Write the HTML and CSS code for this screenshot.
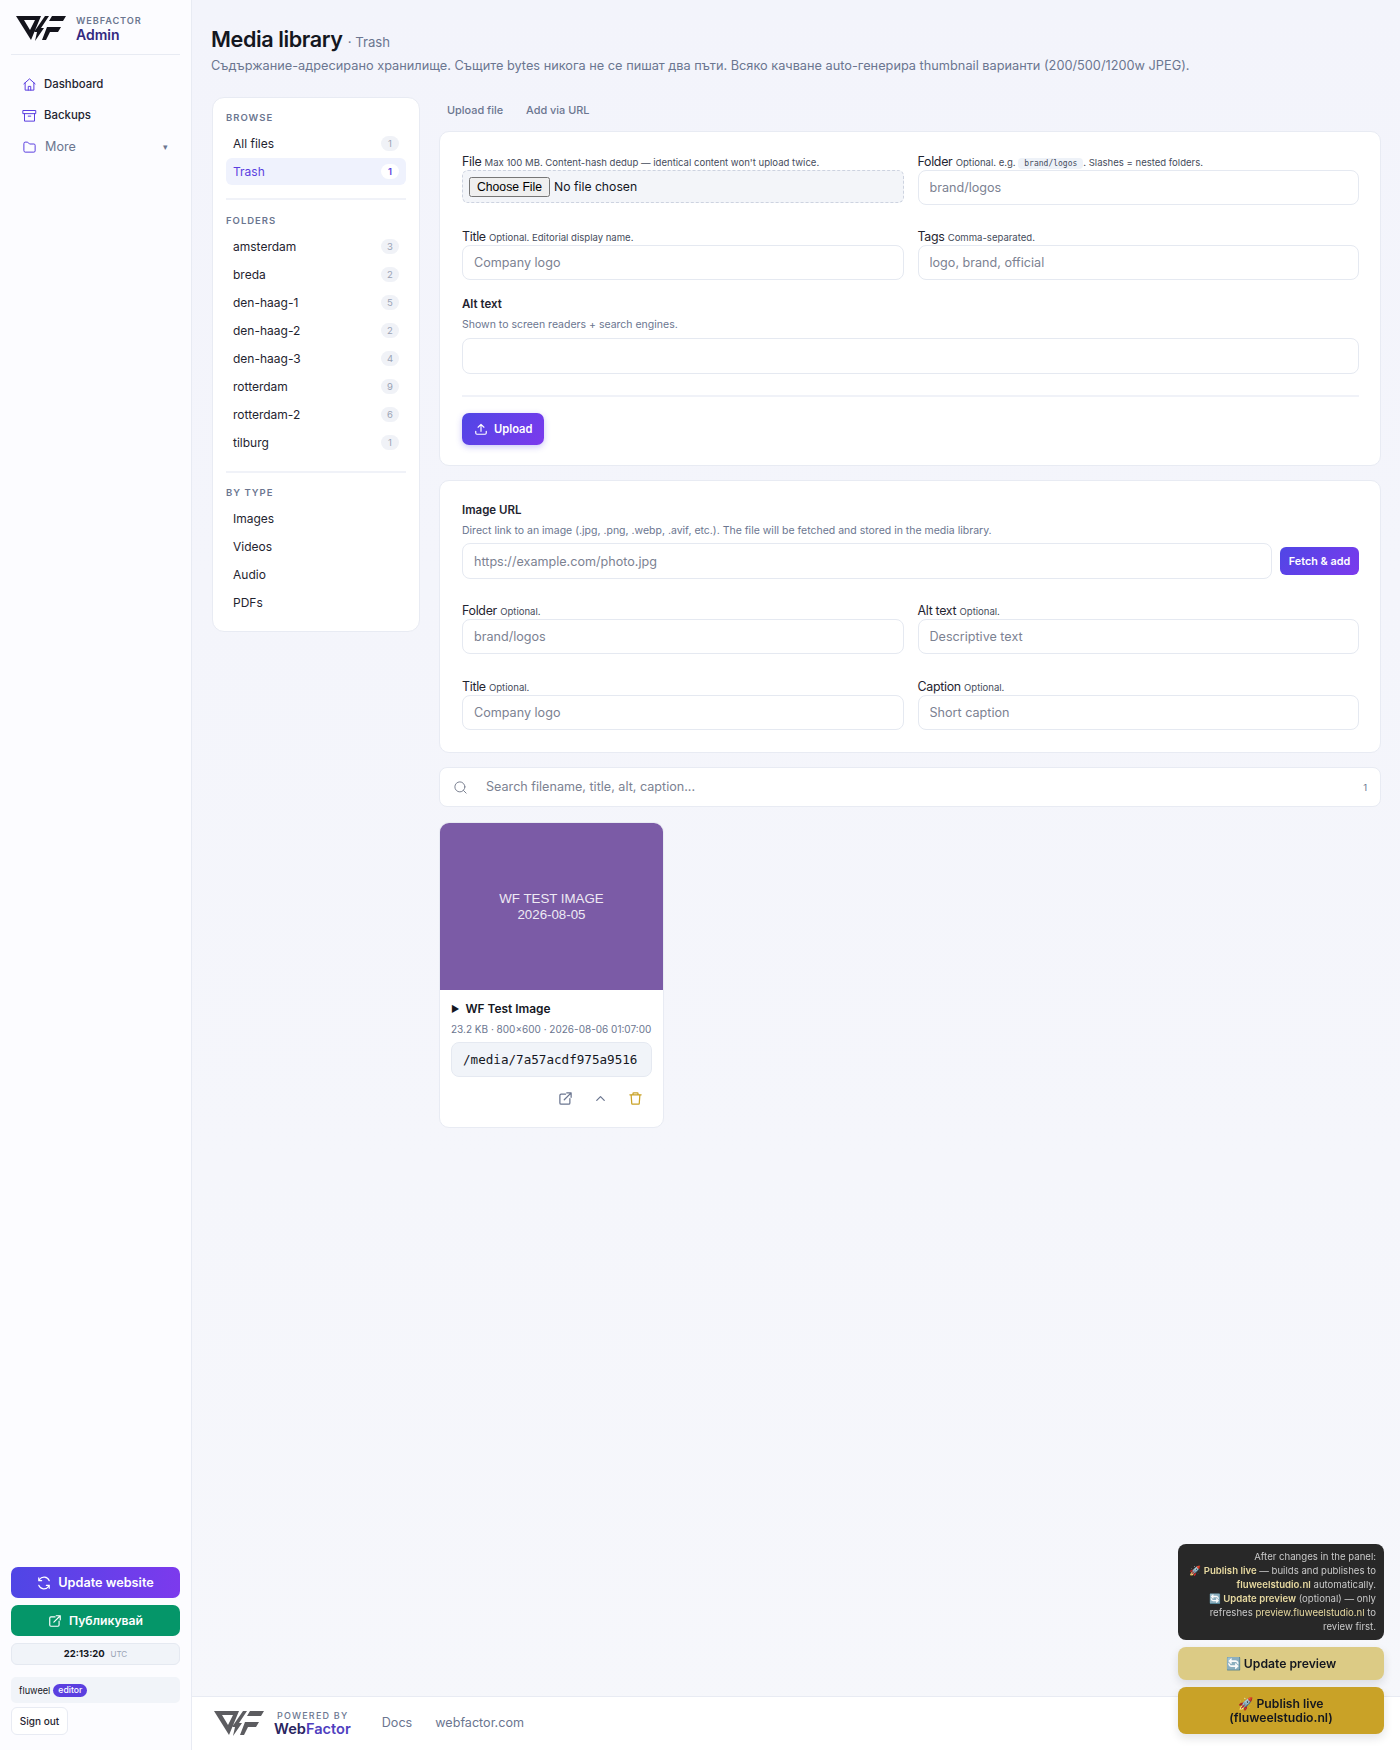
FILE: index.html
```html
<!DOCTYPE html>
<html lang="en">
<head>
  <meta charset="UTF-8">
  <title>Media library</title>
  <link rel="stylesheet" href="styles.css">
</head>
<body>
  <div class="shell">

    <!-- Sidebar -->
    <aside class="sidebar">
      <div class="brand">
        <svg class="wf-logo" viewBox="0 0 50 25" width="50" height="25"><path fill-rule="evenodd" d="M0 0H25L15 24ZM8 4l6 10 5-10ZM29 0h4L25 12h3L19 25l2-9h-3zM36 0h14l-3 5H33zM31 11h14l-3 5H34l-4 8h-4z"/></svg>
        <div>
          <div class="brand-top">WEBFACTOR</div>
          <div class="brand-name">Admin</div>
        </div>
      </div>

      <nav class="side-nav">
        <a class="nav-item">
          <svg class="nav-icon" viewBox="0 0 24 24"><path d="M3 11l9-8 9 8M5 9.500V21h14V9.500M10 21v-6h4v6"/></svg>
          Dashboard
        </a>
        <a class="nav-item">
          <svg class="nav-icon" viewBox="0 0 24 24"><path d="M2 4h20v5H2zM4 9v12h16V9M10 13h4"/></svg>
          Backups
        </a>
        <a class="nav-item nav-more">
          <svg class="nav-icon" viewBox="0 0 24 24"><path d="M3 7a2 2 0 0 1 2-2h4l3 3h7a2 2 0 0 1 2 2v9a2 2 0 0 1-2 2H5a2 2 0 0 1-2-2z"/></svg>
          More
          <span class="caret">▾</span>
        </a>
      </nav>

      <div class="side-bottom">
        <button class="btn-wide btn-purple">
          <svg class="btn-icon" viewBox="0 0 24 24"><path d="M21 8a9.500 9.500 0 0 0-17-1.500L3 8M3 3v5h5M3 16a9.500 9.500 0 0 0 17 1.500l1-1.500M21 21v-5h-5"/></svg>
          Update website
        </button>
        <button class="btn-wide btn-green">
          <svg class="btn-icon" viewBox="0 0 24 24"><path d="M12 5H5a2 2 0 0 0-2 2v12a2 2 0 0 0 2 2h12a2 2 0 0 0 2-2v-7M14 3h7v7M21 3L10 14"/></svg>
          Публикувай
        </button>
        <div class="clock"><b>22:13:20</b> <span>UTC</span></div>
        <div class="user-box">fluweel <span class="role">editor</span></div>
        <button class="sign-out">Sign out</button>
      </div>
    </aside>

    <div class="main">
      <div class="content">
        <h1 class="page-title">Media library <small>· Trash</small></h1>
        <p class="page-sub">Съдържание-адресирано хранилище. Същите bytes никога не се пишат два пъти. Всяко качване auto-генерира thumbnail варианти (200/500/1200w JPEG).</p>

        <div class="columns">
          <!-- Browse panel -->
          <div class="browse">
            <div class="browse-label">BROWSE</div>
            <a class="browse-row">All files <span class="count">1</span></a>
            <a class="browse-row active">Trash <span class="count">1</span></a>
            <hr>
            <div class="browse-label">FOLDERS</div>
            <a class="browse-row">amsterdam <span class="count">3</span></a>
            <a class="browse-row">breda <span class="count">2</span></a>
            <a class="browse-row">den-haag-1 <span class="count">5</span></a>
            <a class="browse-row">den-haag-2 <span class="count">2</span></a>
            <a class="browse-row">den-haag-3 <span class="count">4</span></a>
            <a class="browse-row">rotterdam <span class="count">9</span></a>
            <a class="browse-row">rotterdam-2 <span class="count">6</span></a>
            <a class="browse-row">tilburg <span class="count">1</span></a>
            <hr class="hr-wide">
            <div class="browse-label">BY TYPE</div>
            <a class="browse-row">Images</a>
            <a class="browse-row">Videos</a>
            <a class="browse-row">Audio</a>
            <a class="browse-row">PDFs</a>
          </div>

          <div class="right-col">
            <div class="tabs">
              <a>Upload file</a>
              <a>Add via URL</a>
            </div>

            <!-- Upload form -->
            <section class="card upload-card">
              <div class="field-grid">
                <label class="field">
                  <span class="field-label">File <small>Max 100 MB. Content-hash dedup — identical content won't upload twice.</small></span>
                  <input class="file-input" type="file">
                </label>
                <label class="field">
                  <span class="field-label">Folder <small>Optional. e.g. <code>brand/logos</code>. Slashes = nested folders.</small></span>
                  <input type="text" placeholder="brand/logos">
                </label>
                <label class="field">
                  <span class="field-label">Title <small>Optional. Editorial display name.</small></span>
                  <input type="text" placeholder="Company logo">
                </label>
                <label class="field">
                  <span class="field-label">Tags <small>Comma-separated.</small></span>
                  <input type="text" placeholder="logo, brand, official">
                </label>
              </div>
              <div class="stack-label">Alt text</div>
              <div class="stack-hint">Shown to screen readers + search engines.</div>
              <input class="alt-input" type="text">
              <hr class="form-rule">
              <button class="btn-upload">
                <svg class="btn-icon" viewBox="0 0 24 24"><path d="M3 16v3a2 2 0 0 0 2 2h14a2 2 0 0 0 2-2v-3M12 16V4M7 9l5-5 5 5"/></svg>
                Upload
              </button>
            </section>

            <!-- Add via URL form -->
            <section class="card url-card">
              <div class="stack-label">Image URL</div>
              <div class="stack-hint">Direct link to an image (.jpg, .png, .webp, .avif, etc.). The file will be fetched and stored in the media library.</div>
              <div class="url-row">
                <input type="text" placeholder="https://example.com/photo.jpg">
                <button class="btn-fetch">Fetch &amp; add</button>
              </div>
              <div class="field-grid url-grid">
                <label class="field">
                  <span class="field-label">Folder <small>Optional.</small></span>
                  <input type="text" placeholder="brand/logos">
                </label>
                <label class="field">
                  <span class="field-label">Alt text <small>Optional.</small></span>
                  <input type="text" placeholder="Descriptive text">
                </label>
                <label class="field">
                  <span class="field-label">Title <small>Optional.</small></span>
                  <input type="text" placeholder="Company logo">
                </label>
                <label class="field">
                  <span class="field-label">Caption <small>Optional.</small></span>
                  <input type="text" placeholder="Short caption">
                </label>
              </div>
            </section>

            <div class="search-bar">
              <svg class="search-icon" viewBox="0 0 24 24"><circle cx="11" cy="11" r="8"/><path d="M21 21l-4.300-4.300"/></svg>
              <input type="text" placeholder="Search filename, title, alt, caption...">
              <span class="search-count">1</span>
            </div>

            <!-- Media grid -->
            <div class="media-card">
              <div class="thumb">WF TEST IMAGE<br>2026-08-05</div>
              <div class="media-body">
                <div class="media-title"><span class="tri">▶</span> WF Test Image</div>
                <div class="media-meta">23.2 KB · 800×600 · 2026-08-06 01:07:00</div>
                <div class="media-path">/media/7a57acdf975a9516</div>
                <div class="media-actions">
                  <svg viewBox="0 0 24 24"><path d="M12 5H5a2 2 0 0 0-2 2v12a2 2 0 0 0 2 2h12a2 2 0 0 0 2-2v-7M14 3h7v7M21 3L10 14"/></svg>
                  <svg viewBox="0 0 24 24"><path d="M6 15l6-6 6 6"/></svg>
                  <svg class="trash" viewBox="0 0 24 24"><path d="M3 6h18M8 6V4a1 1 0 0 1 1-1h6a1 1 0 0 1 1 1v2M5 6l1 14a1 1 0 0 0 1 1h10a1 1 0 0 0 1-1l1-14"/></svg>
                </div>
              </div>
            </div>
          </div>
        </div>
      </div>

      <footer class="footer">
        <svg class="wf-logo footer-logo" viewBox="0 0 50 25" width="50" height="25"><path fill-rule="evenodd" d="M0 0H25L15 24ZM8 4l6 10 5-10ZM29 0h4L25 12h3L19 25l2-9h-3zM36 0h14l-3 5H33zM31 11h14l-3 5H34l-4 8h-4z"/></svg>
        <div class="powered">
          <div class="powered-top">POWERED BY</div>
          <div class="powered-name">Web<span>Factor</span></div>
        </div>
        <a class="foot-link">Docs</a>
        <a class="foot-link">webfactor.com</a>
      </footer>
    </div>
  </div>

  <!-- Floating publish widget -->
  <div class="publish-widget">
    <div class="publish-note">
      After changes in the panel:<br>
      🚀 <b>Publish live</b> — builds and publishes to <b>fluweelstudio.nl</b> automatically.<br>
      🔄 <b>Update preview</b> (optional) — only refreshes <em>preview.fluweelstudio.nl</em> to review first.
    </div>
    <button class="btn-preview">🔄 Update preview</button>
    <button class="btn-live">🚀 Publish live<br>(fluweelstudio.nl)</button>
  </div>
</body>
</html>
```

FILE: styles.css
```css
* {
  margin: 0;
  padding: 0;
  box-sizing: border-box;
}

body {
  font-family: Inter, 'Noto Sans', sans-serif;
  color: #14171f;
  background: linear-gradient(#f3f4fb, #f6f7fb);
}

button, input {
  font-family: inherit;
}

svg {
  fill: none;
  stroke: currentColor;
  stroke-width: 2;
  stroke-linecap: round;
  stroke-linejoin: round;
  flex-shrink: 0;
}

.shell {
  display: flex;
  min-height: 100vh;
}

/* Sidebar */
.sidebar {
  width: 192px;
  flex-shrink: 0;
  display: flex;
  flex-direction: column;
  padding: 0 11px;
  background: #fcfcff;
  border-right: 1px solid #e8ebf3;
}

.brand {
  display: flex;
  align-items: center;
  gap: 10px;
  height: 55px;
  padding: 3px 0 0 5px;
  border-bottom: 1px solid #e8ebf3;
}

.wf-logo {
  fill: #14141c;
  stroke: none;
}

.brand-top {
  font-size: 9.200px;
  font-weight: 600;
  letter-spacing: 0.9px;
  line-height: 12px;
  color: #6b7690;
}

.brand-name {
  font-size: 14px;
  font-weight: 600;
  line-height: 15px;
  color: #33297f;
}

.side-nav {
  display: flex;
  flex-direction: column;
  gap: 3px;
  padding-top: 15px;
}

.nav-item {
  display: flex;
  align-items: center;
  gap: 7px;
  height: 28px;
  padding-left: 11px;
  font-size: 11.400px;
  font-weight: 500;
  color: #1f2430;
}

.nav-icon {
  width: 15px;
  height: 15px;
  stroke-width: 1.6;
  color: #5b3fe0;
}

.nav-more {
  gap: 8px;
  font-size: 12.600px;
  font-weight: 400;
  color: #6b7690;
}

.caret {
  margin-left: auto;
  margin-right: 12px;
  font-size: 9px;
}

.side-bottom {
  margin-top: auto;
  padding-bottom: 15px;
  display: flex;
  flex-direction: column;
}

.btn-wide {
  display: flex;
  align-items: center;
  justify-content: center;
  gap: 7px;
  height: 31px;
  border: none;
  border-radius: 7px;
  color: #fff;
  font-size: 12.700px;
  font-weight: 600;
}

.btn-icon {
  width: 14px;
  height: 14px;
}

.btn-purple {
  background: linear-gradient(90deg, #4f46e5, #7c3aed);
  margin-bottom: 7px;
}

.btn-green {
  background: #059669;
  font-size: 12.200px;
  margin-bottom: 7px;
}

.clock {
  height: 22px;
  line-height: 20px;
  text-align: center;
  font-size: 9.500px;
  background: #f1f4f9;
  border: 1px solid #e5e9f1;
  border-radius: 6px;
  margin-bottom: 12px;
}

.clock span {
  margin-left: 3px;
  font-size: 8px;
  color: #9aa3b5;
}

.user-box {
  height: 26px;
  display: flex;
  align-items: center;
  gap: 3px;
  padding-left: 8px;
  font-size: 9.200px;
  background: #f1f4f9;
  border-radius: 5px;
  margin-bottom: 4px;
}

.role {
  padding: 1px 5px 2px;
  border-radius: 8px;
  background: #5b3fe0;
  color: #fff;
  font-weight: 500;
  font-size: 8.600px;
}

.sign-out {
  width: 57px;
  height: 28px;
  background: #fff;
  border: 1px solid #e8ebf3;
  border-radius: 6px;
  font-size: 10px;
  font-weight: 500;
  color: #1f2430;
}

/* Main area */
.main {
  flex: 1;
  min-width: 0;
  display: flex;
  flex-direction: column;
}

.content {
  flex: 1;
  padding: 25px 19px 0 19px;
}

.page-title {
  height: 29px;
  font-size: 21.600px;
  line-height: 29px;
  font-weight: 600;
  letter-spacing: -0.4px;
}

.page-title small {
  font-size: 13.200px;
  font-weight: 400;
  letter-spacing: 0;
  color: #6b7690;
}

.page-sub {
  margin-top: 4px;
  font-size: 12.760px;
  line-height: 16px;
  color: #6b7690;
}

.columns {
  display: flex;
  align-items: flex-start;
  gap: 19px;
  margin-top: 23px;
}

/* Browse panel */
.browse {
  width: 208px;
  flex-shrink: 0;
  margin-left: 1px;
  padding: 14px 13px;
  background: #fff;
  border: 1px solid #e8ebf3;
  border-radius: 12px;
}

.browse-label {
  font-size: 9.500px;
  font-weight: 600;
  letter-spacing: 1px;
  line-height: 12px;
  color: #6b7690;
  margin-bottom: 6px;
}

.browse-row {
  display: flex;
  align-items: center;
  justify-content: space-between;
  height: 27px;
  margin-bottom: 1px;
  padding: 0 7px;
  border-radius: 6px;
  font-size: 12px;
  color: #1f2430;
}

.browse-row.active {
  background: #eff2fd;
  color: #5b3fe0;
}

.count {
  min-width: 18px;
  height: 15px;
  line-height: 15px;
  text-align: center;
  border-radius: 8px;
  background: #f0f2f7;
  color: #9aa3b5;
  font-size: 9.500px;
}

.active .count {
  background: #fff;
  color: #5b3fe0;
  font-weight: 600;
}

.browse hr {
  border: none;
  height: 2px;
  background: #f0f2f8;
  margin: 13px 0 15px;
}

.browse hr.hr-wide {
  margin: 15px 0 14px;
}

/* Right column */
.right-col {
  flex: 1;
  min-width: 0;
}

.tabs {
  display: flex;
  gap: 23px;
  height: 34px;
  padding: 6px 8px 0;
  font-size: 10.900px;
  font-weight: 500;
  line-height: 14px;
  color: #6b7690;
}

.card {
  background: #fff;
  border: 1px solid #e8ebf3;
  border-radius: 10px;
  padding: 21px 21px 0 22px;
  margin-bottom: 14px;
}

.upload-card {
  height: 335px;
}

.url-card {
  height: 273px;
  padding-top: 22px;
}

.field-grid {
  display: grid;
  grid-template-columns: 1fr 1fr;
  column-gap: 14px;
  row-gap: 23px;
}

.field {
  display: block;
}

.field-label {
  display: block;
  height: 17px;
  font-size: 12.400px;
  line-height: 17px;
  letter-spacing: -0.3px;
  color: #1f2430;
  white-space: nowrap;
}

.field-label small {
  font-size: 9.550px;
  line-height: 1;
  letter-spacing: 0;
  color: #454c5c;
}

.field-label code {
  font-family: 'DejaVu Sans Mono', monospace;
  font-size: 8px;
  padding: 1px 6px;
  background: #eef2f8;
  border-radius: 4px;
}

input[type="text"] {
  display: block;
  width: 100%;
  height: 35px;
  padding: 0 11px;
  font-size: 12.600px;
  color: #1f2430;
  background: #fff;
  border: 1px solid #e5e9f1;
  border-radius: 8px;
  outline: none;
}

input::placeholder {
  color: #7c8292;
}

.file-input {
  display: block;
  width: 100%;
  height: 33px;
  padding: 6px;
  font-size: 12.200px;
  background: #f3f5f9;
  border: 1px dashed #cdd3e0;
  border-radius: 6px;
}

.stack-label {
  font-size: 11.500px;
  font-weight: 600;
  line-height: 14px;
  color: #1f2430;
}

.upload-card .stack-label {
  margin-top: 17px;
}

.stack-hint {
  margin-top: 7px;
  font-size: 10.500px;
  line-height: 13px;
  color: #6b7690;
}

input.alt-input {
  height: 36px;
  margin-top: 7px;
}

.form-rule {
  border: none;
  height: 2px;
  background: #f0f2f8;
  margin: 21px 0 16px;
}

.btn-upload {
  display: flex;
  align-items: center;
  gap: 6px;
  height: 32px;
  padding: 0 12px;
  border: none;
  border-radius: 7px;
  color: #fff;
  font-size: 11.200px;
  font-weight: 600;
  background: linear-gradient(135deg, #4f46e5, #7c3aed);
  box-shadow: 0 2px 6px rgba(79, 70, 229, 0.3);
}

.url-row {
  display: flex;
  align-items: center;
  gap: 8px;
  margin-top: 6px;
}

.url-row input[type="text"] {
  height: 36px;
}

.btn-fetch {
  flex-shrink: 0;
  width: 79px;
  height: 28px;
  border: none;
  border-radius: 6px;
  color: #fff;
  font-size: 10.800px;
  font-weight: 600;
  background: linear-gradient(135deg, #4f46e5, #7c3aed);
}

.url-grid {
  margin-top: 23px;
  row-gap: 24px;
}

.search-bar {
  display: flex;
  align-items: center;
  height: 40px;
  padding: 0 13px;
  background: #fff;
  border: 1px solid #e8ebf3;
  border-radius: 8px;
  margin-bottom: 15px;
}

.search-icon {
  width: 15px;
  height: 15px;
  stroke-width: 1.6;
  color: #7c8292;
}

.search-bar input[type="text"] {
  flex: 1;
  height: 30px;
  padding: 0 0 0 18px;
  margin-bottom: 2px;
  border: none;
  background: transparent;
}

.search-count {
  font-size: 9.500px;
  color: #6b7690;
}

/* Media card */
.media-card {
  width: 225px;
  height: 306px;
  background: #fff;
  border: 1px solid #e8ebf3;
  border-radius: 10px;
  overflow: hidden;
}

.thumb {
  height: 167px;
  display: flex;
  align-items: center;
  justify-content: center;
  text-align: center;
  background: #7b5ba6;
  color: #eeeaf4;
  font-family: 'Liberation Sans', sans-serif;
  font-size: 13.300px;
  line-height: 16px;
}

.media-body {
  padding: 10px 11px 0;
}

.media-title {
  font-size: 11.900px;
  font-weight: 600;
  line-height: 17px;
}

.tri {
  font-size: 9px;
  line-height: 1;
  margin-right: 3px;
  vertical-align: 1px;
}

.media-meta {
  margin-top: 6px;
  font-size: 10px;
  line-height: 12px;
  color: #6b7690;
  white-space: nowrap;
}

.media-path {
  height: 35px;
  line-height: 33px;
  margin-top: 7px;
  padding-left: 11px;
  font-family: 'DejaVu Sans Mono', monospace;
  font-size: 12.600px;
  background: #f1f4f9;
  border: 1px solid #e5e9f1;
  border-radius: 8px;
  overflow: hidden;
}

.media-actions {
  display: flex;
  justify-content: flex-end;
  gap: 20px;
  margin-top: 14px;
  padding-right: 9px;
  color: #6b7690;
}

.media-actions svg {
  width: 15px;
  height: 15px;
}

.media-actions .trash {
  color: #c9a227;
}

/* Footer */
.footer {
  height: 54px;
  flex-shrink: 0;
  display: flex;
  align-items: center;
  padding-left: 22px;
  background: #fff;
  border-top: 1px solid #e8ebf3;
}

.footer-logo {
  fill: #5c5c60;
}

.powered {
  margin-left: 10px;
  margin-right: 31px;
}

.powered-top {
  font-size: 9px;
  font-weight: 500;
  letter-spacing: 1.2px;
  line-height: 11px;
  color: #6b7690;
  padding-left: 3px;
}

.powered-name {
  font-size: 14.600px;
  font-weight: 600;
  line-height: 16px;
  color: #2a2560;
}

.powered-name span {
  color: #4f3fc0;
}

.foot-link {
  font-size: 12.600px;
  color: #6b7690;
  margin-right: 23px;
  margin-bottom: 2px;
}

/* Floating publish widget */
.publish-widget {
  position: fixed;
  right: 16px;
  bottom: 16px;
  width: 206px;
  display: flex;
  flex-direction: column;
  gap: 7px;
}

.publish-note {
  padding: 6px 8px;
  font-size: 9.600px;
  line-height: 14px;
  text-align: right;
  color: #c9c9c9;
  background: #282828;
  border-radius: 8px;
}

.publish-note b {
  color: #e7d9a0;
  font-weight: 600;
}

.publish-note em {
  font-style: normal;
  color: #e7d9a0;
}

.btn-preview, .btn-live {
  border: none;
  border-radius: 8px;
  color: #14171f;
  font-size: 12.200px;
  font-weight: 600;
  line-height: 14px;
  box-shadow: 0 4px 10px rgba(20, 23, 31, 0.12);
}

.btn-preview {
  height: 33px;
  background: #dccb85;
}

.btn-live {
  height: 47px;
  background: #c9a227;
}
```
